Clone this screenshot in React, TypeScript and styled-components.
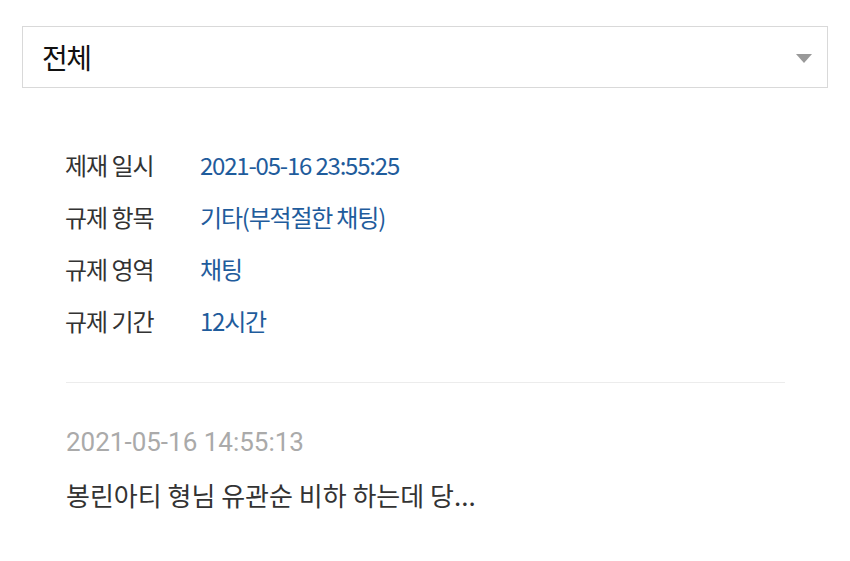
import React from 'react';
import styled, { createGlobalStyle } from 'styled-components';

const GlobalStyle = createGlobalStyle`
	html, body {
		margin: 0;
		padding: 0;
		background: #ffffff;
	}

	body {
		font-family: Roboto, "Noto Sans CJK KR", sans-serif;
	}
`;

const Page = styled.div`
	width: 850px;
	height: 561px;
	padding: 26px 22px 0 22px;
	box-sizing: border-box;
	background: #ffffff;
	overflow: hidden;
`;

const Select = styled.div`
	height: 62px;
	border: 1px solid #d9d9d9;
	display: flex;
	align-items: center;
	justify-content: space-between;
	padding: 0 15px 0 19px;
	box-sizing: border-box;
`;

const SelectLabel = styled.span`
	font-family: "Noto Sans CJK KR", sans-serif;
	font-size: 28px;
	letter-spacing: -1.5px;
	color: #111111;
`;

const Caret = styled.span`
	width: 0;
	height: 0;
	border-left: 8px solid transparent;
	border-right: 8px solid transparent;
	border-top: 9px solid #999999;
	margin-top: 2px;
`;

const Details = styled.dl`
	margin: 0;
	padding: 60px 0 0 43px;
	display: grid;
	grid-template-columns: 135px 1fr;
	row-gap: 19px;
	align-items: center;
`;

const Term = styled.dt`
	font-family: "Noto Sans CJK KR", sans-serif;
	font-size: 24px;
	line-height: 33px;
	letter-spacing: -1px;
	color: #333333;
`;

const Value = styled.dd`
	margin: 0;
	font-family: "Noto Sans CJK KR", sans-serif;
	font-size: 24px;
	line-height: 33px;
	letter-spacing: -1.2px;
	color: #1f5c9c;
`;

const Divider = styled.hr`
	margin: 45px 43px 0 44px;
	border: 0;
	border-top: 1px solid #ececec;
`;

const Message = styled.div`
	padding: 43px 0 0 44px;
	display: flex;
	flex-direction: column;
	gap: 19px;
`;

const Stamp = styled.div`
	font-family: Roboto, "Noto Sans CJK KR", sans-serif;
	font-size: 26px;
	line-height: 33px;
	color: #aaaaaa;
`;

const Body = styled.div`
	font-family: "Noto Sans CJK KR", sans-serif;
	font-size: 26px;
	line-height: 33px;
	color: #333333;
`;

const rows: [string, string][] = [
	['제재 일시', '2021-05-16 23:55:25'],
	['규제 항목', '기타(부적절한 채팅)'],
	['규제 영역', '채팅'],
	['규제 기간', '12시간'],
];

function App() {
	return (
		<Page>
			<GlobalStyle />
			<Select>
				<SelectLabel>전체</SelectLabel>
				<Caret />
			</Select>
			<Details>
				{rows.map(([term, value]) => (
					<React.Fragment key={term}>
						<Term>{term}</Term>
						<Value>{value}</Value>
					</React.Fragment>
				))}
			</Details>
			<Divider />
			<Message>
				<Stamp>2021-05-16 14:55:13</Stamp>
				<Body>봉린아티 형님 유관순 비하 하는데 당...</Body>
			</Message>
		</Page>
	);
}

export default App;
